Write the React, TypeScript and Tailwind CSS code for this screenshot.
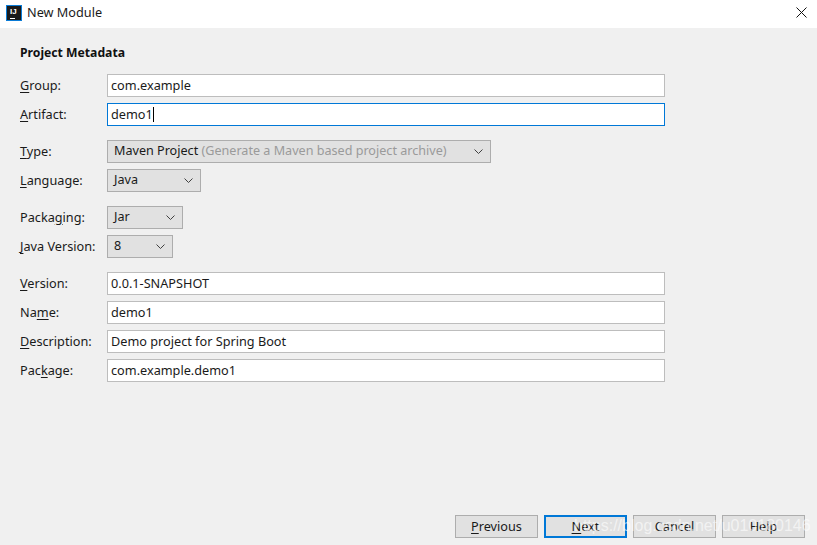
import type { ReactNode } from "react";

const Mn = ({ children }: { children: ReactNode }) => (
  <span className="underline underline-offset-2 decoration-1">{children}</span>
);

const Chevron = () => (
  <svg width="9" height="6" viewBox="0 0 9 6" className="shrink-0" fill="none">
    <path d="M0.5 0.5L4.5 4.5L8.5 0.5" stroke="#404040" strokeWidth="1" />
  </svg>
);

const Row = ({ label, children }: { label: ReactNode; children: ReactNode }) => (
  <div className="flex items-center h-[23px]">
    <div className="w-[87px] shrink-0 text-[12.7px] text-[#1a1a1a]">{label}</div>
    {children}
  </div>
);

const TextField = ({ value, focused }: { value: string; focused?: boolean }) => (
  <div
    className={
      focused
        ? "w-[558px] h-[23px] bg-white border border-[#0078d7] px-[3px] flex items-center text-[12.7px] text-[#1a1a1a]"
        : "w-[558px] h-[23px] bg-white border border-[#bdbdbd] px-[3px] flex items-center text-[12.7px] text-[#1a1a1a]"
    }
  >
    {value}
    {focused && <span className="w-px h-[15px] bg-black" />}
  </div>
);

const Select = ({ width, children }: { width: string; children: ReactNode }) => (
  <div
    className={`${width} h-[23px] bg-[#e1e1e1] border border-[#adadad] pl-[6px] pr-[7px] flex items-center justify-between text-[12.6px] text-[#1a1a1a]`}
  >
    <span className="whitespace-nowrap">{children}</span>
    <Chevron />
  </div>
);

const Button = ({ children, focused }: { children: ReactNode; focused?: boolean }) => (
  <div
    className={
      focused
        ? "w-[83px] h-[23px] bg-[#e1e1e1] border-2 border-[#0078d7] flex items-center justify-center text-[12.7px] text-[#1a1a1a]"
        : "w-[83px] h-[23px] bg-[#e1e1e1] border border-[#adadad] flex items-center justify-center text-[12.7px] text-[#1a1a1a]"
    }
  >
    <span>{children}</span>
  </div>
);

export default function App() {
  return (
    <div className="relative w-[817px] h-[545px] overflow-hidden bg-[#f0f0f0] flex flex-col font-['Noto_Sans','Open_Sans',sans-serif]">
      {/* title bar */}
      <div className="h-[28px] shrink-0 bg-white flex items-center pl-[6px] pr-[10px] pb-[3px]">
        <div className="w-[16px] h-[16px] bg-[#1a1a1a] border border-[#0a7bd6] flex flex-col pl-[3px] pt-[2px]">
          <span className="text-[8px] leading-[7px] font-bold text-white font-['Liberation_Sans',sans-serif]">IJ</span>
          <span className="w-[5px] h-px bg-white mt-[3px]" />
        </div>
        <span className="ml-[5px] text-[12.7px] text-[#1a1a1a]">New Module</span>
        <svg width="11" height="11" viewBox="0 0 11 11" className="ml-auto mb-px" fill="none">
          <path d="M0.5 0.5L10.5 10.5M10.5 0.5L0.5 10.5" stroke="#111" strokeWidth="1" />
        </svg>
      </div>

      {/* form */}
      <div className="flex-1 flex flex-col pl-[20px] pt-[16px]">
        <div className="h-[18px] flex items-center text-[12.2px] font-bold text-[#111]">Project Metadata</div>

        <div className="flex flex-col gap-[6px] mt-[12px]">
          <Row label={<><Mn>G</Mn>roup:</>}>
            <TextField value="com.example" />
          </Row>
          <Row label={<><Mn>A</Mn>rtifact:</>}>
            <TextField value="demo1" focused />
          </Row>
        </div>

        <div className="flex flex-col gap-[6px] mt-[14px]">
          <Row label={<><Mn>T</Mn>ype:</>}>
            <Select width="w-[384px]">
              Maven Project <span className="text-[#9a9a9a]">(Generate a Maven based project archive)</span>
            </Select>
          </Row>
          <Row label={<><Mn>L</Mn>anguage:</>}>
            <Select width="w-[94px]">Java</Select>
          </Row>
        </div>

        <div className="flex flex-col gap-[6px] mt-[14px]">
          <Row label={<>Packa<Mn>g</Mn>ing:</>}>
            <Select width="w-[76px]">Jar</Select>
          </Row>
          <Row label={<><Mn>J</Mn>ava Version:</>}>
            <Select width="w-[66px]">8</Select>
          </Row>
        </div>

        <div className="flex flex-col gap-[6px] mt-[14px]">
          <Row label={<><Mn>V</Mn>ersion:</>}>
            <TextField value="0.0.1-SNAPSHOT" />
          </Row>
          <Row label={<>Na<Mn>m</Mn>e:</>}>
            <TextField value="demo1" />
          </Row>
          <Row label={<><Mn>D</Mn>escription:</>}>
            <TextField value="Demo project for Spring Boot" />
          </Row>
          <Row label={<>Pac<Mn>k</Mn>age:</>}>
            <TextField value="com.example.demo1" />
          </Row>
        </div>
      </div>

      {/* footer buttons */}
      <div className="flex justify-end gap-[6px] pr-[12px] pb-[7px]">
        <Button><Mn>P</Mn>revious</Button>
        <Button focused><Mn>N</Mn>ext</Button>
        <Button>Cancel</Button>
        <Button>Help</Button>
      </div>

      {/* csdn watermark */}
      <div className="absolute left-[574px] top-[514px] text-[16px] leading-[24px] text-white/60 whitespace-nowrap font-['Liberation_Sans',sans-serif]">
        https://blog.csdn.net/u010180146
      </div>
    </div>
  );
}
